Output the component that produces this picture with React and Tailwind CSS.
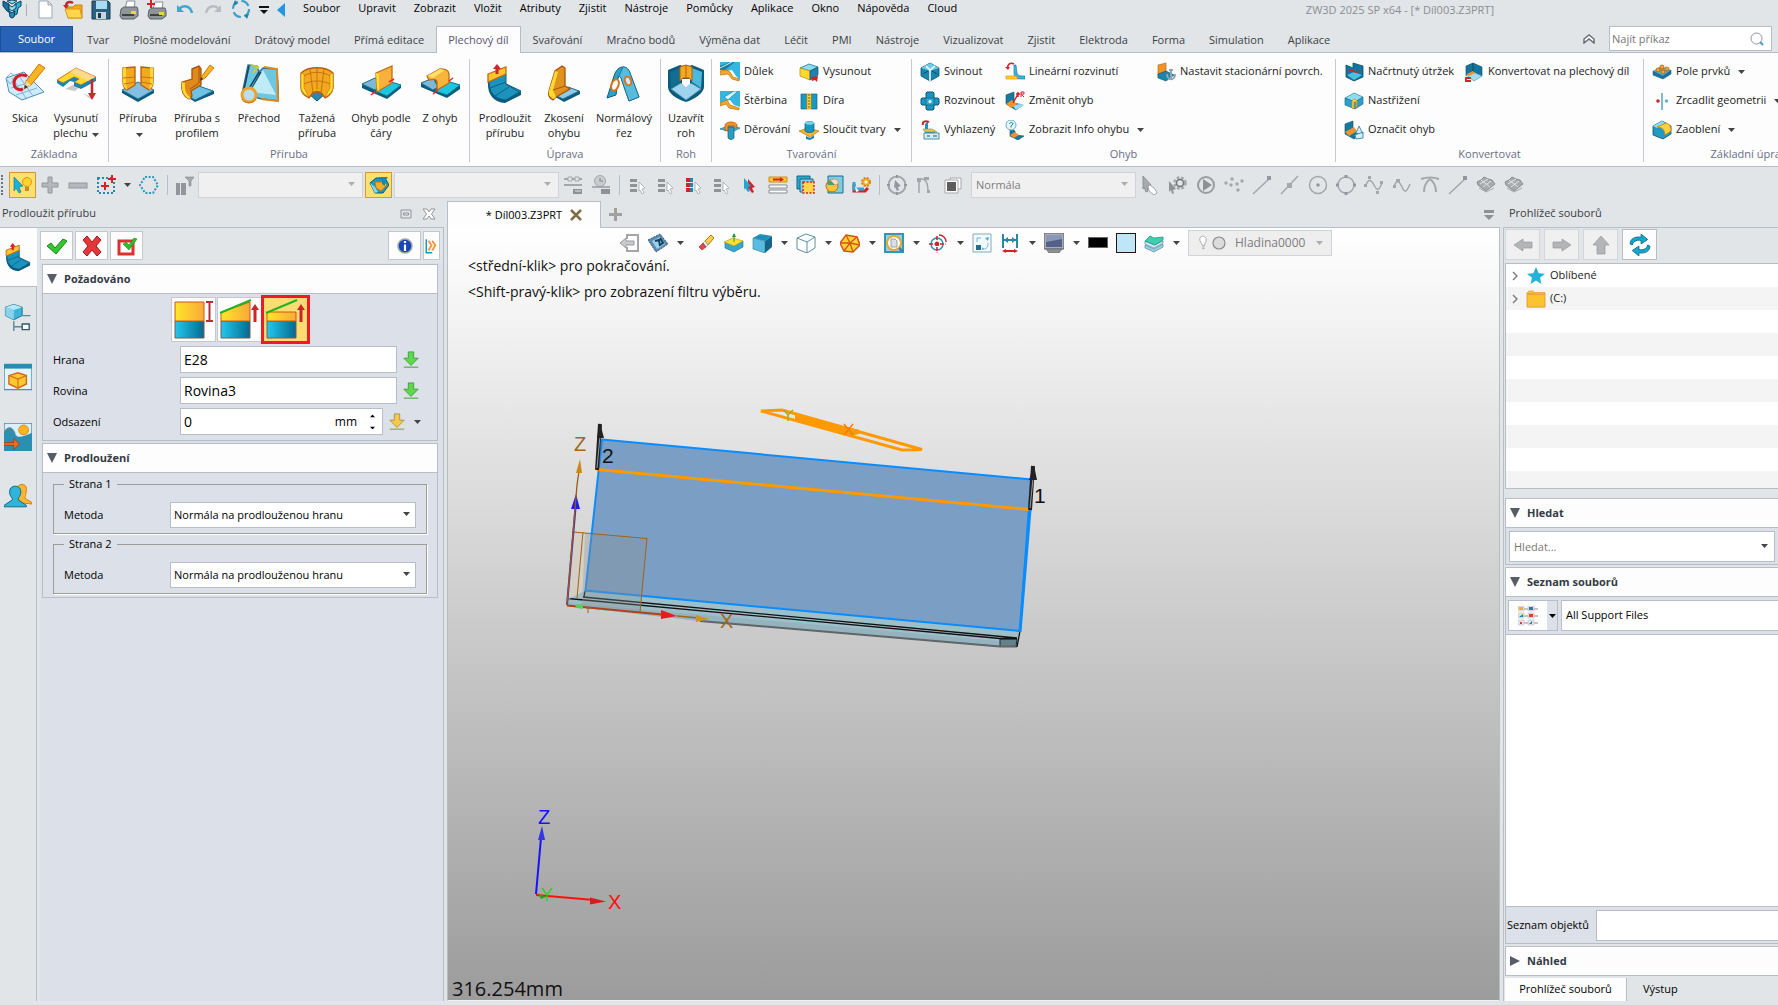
import React, { useState } from "react";
import clsx from "clsx";

// 20x20 drawings used in the bars and the side panels
const art = {
  logo: (
    <>
      <path d="M1 1l6 3v8l-2-1-4-5z" fill="#1b6f9c" stroke="#0d3b55" />
      <path d="M19 1l-6 3-2 12 4-2 1-6 3-2z" fill="#27b4dc" stroke="#0d3b55" />
      <path d="M5 1l5 3 5-3-5-1zM7 5l3 2 4-3v4l-4 3-3-2z" fill="#8edcf3" stroke="#17455f" />
      <path d="M7 11l3 2 3-2-1 6-2 1-2-1z" fill="#1d8fbb" stroke="#0d3b55" />
    </>
  ),
  doc: <path d="M4 1h9l4 4v13H4zM13 1v4h4" fill="#fff" stroke="#9ba7b3" />,
  open: (
    <>
      <path d="M4 7h6l2-2h7v13H5z" fill="#f4a91c" stroke="#c98210" />
      <path d="M2 9h15l2 9H5z" fill="#ffd54a" stroke="#dd9a17" />
      <path d="M3 6c0-4 4-5 7-3" fill="none" stroke="#d2232a" strokeWidth="2.4" />
      <path d="M0 5h6L3 9z" fill="#d2232a" />
    </>
  ),
  save: (
    <>
      <path d="M1 1h16l2 2v16H1z" fill="#2a6180" stroke="#173b50" />
      <rect x="5" y="1" width="11" height="8" fill="#a9dcf0" />
      <rect x="5" y="12" width="10" height="7" fill="#c8d3da" />
      <rect x="7" y="13" width="3" height="5" fill="#173b50" />
    </>
  ),
  printer: (
    <>
      <path d="M6 9l2-8h8l-1 8z" fill="#fff" stroke="#8a8f94" />
      <path d="M2 9l3-2h13l1 3v6l-4 3H3l-2-3z" fill="#8f959b" stroke="#5c6166" />
      <path d="M3 15h12" stroke="#3d4145" strokeWidth="2" />
      <rect x="12" y="11" width="5" height="3" fill="#e9d93c" />
    </>
  ),
  printerAdd: (
    <>
      <path d="M6 9l2-7h8l-1 7z" fill="#fff" stroke="#8a8f94" />
      <path d="M2 10l3-2h13l1 3v5l-4 3H3l-2-3z" fill="#8f959b" stroke="#5c6166" />
      <path d="M3 15h12" stroke="#3d4145" strokeWidth="2" />
      <rect x="12" y="12" width="5" height="3" fill="#e9d93c" />
      <path d="M4 0v8M0 4h8" stroke="#d2232a" strokeWidth="2" />
    </>
  ),
  undo: (
    <>
      <path d="M4 9c4-4 11-4 13 4" fill="none" stroke="#3ba9cc" strokeWidth="2.500" />
      <path d="M2 5v7h7z" fill="#3ba9cc" />
    </>
  ),
  redo: (
    <>
      <path d="M16 9C12 5 5 5 3 13" fill="none" stroke="#b9bdc1" strokeWidth="2.500" />
      <path d="M18 5v7h-7z" fill="#b9bdc1" />
    </>
  ),
  cycle: (
    <>
      <circle cx="10" cy="9" r="8" fill="none" stroke="#3ba0c6" strokeWidth="2.2" strokeDasharray="9 3.6" />
      <path d="M2 5l5-1-3-4zM18 14l-5 1 3 4z" fill="#1f83ab" />
    </>
  ),
  cursorBulb: (
    <>
      <path d="M1 2l9 9-4 1 2 5-2 1-3-5-2 3z" fill="#17b3dd" stroke="#0a6f92" strokeWidth=".6" />
      <circle cx="14" cy="7" r="4.500" fill="#ffd52e" stroke="#dd941b" />
      <path d="M12 12h4v4h-4z" fill="#c58c2a" />
    </>
  ),
  plus: <path d="M8 2h4v6h6v4h-6v6H8v-6H2V8h6z" fill="#b5b8bb" stroke="#93979b" />,
  minus: <rect x="1" y="8" width="18" height="5" fill="#b5b8bb" stroke="#93979b" />,
  pick: (
    <>
      <rect x="2" y="3" width="16" height="15" fill="none" stroke="#2787ad" strokeWidth="2" strokeDasharray="2 2" />
      <path d="M9 7v8M5 11h8M16 0v8M12 4h8" stroke="#d2232a" strokeWidth="2" />
    </>
  ),
  hexSel: <path d="M6 2h8l5 8-5 8H6l-5-8z" fill="none" stroke="#2d97bd" strokeWidth="2" strokeDasharray="2 1.6" />,
  filter: (
    <>
      <path d="M2 8h4v12H2zM7 8h5v12H7z" fill="#93979b" />
      <path d="M11 2h9l-3 4v5h-2V6z" fill="#a4a8ab" stroke="#83878b" strokeWidth=".6" />
    </>
  ),
  partFilter: (
    <>
      <path d="M1 8l6-5h9l4 7-6 8H6z" fill="#1a9bc4" stroke="#0e5673" />
      <path d="M1 8l5 4 3 5-3 1z" fill="#8ad7ef" />
      <path d="M6 7h9l3 3-6 6-5-3z" fill="#f4ab25" stroke="#b9730d" strokeWidth=".8" />
      <path d="M10 2h9l-3 4v5l-3-2V6z" fill="#1e86a8" />
    </>
  ),
  chain: (
    <>
      <path d="M1 4h4m3 0h4m3 0h4M1 10h18" stroke="#a3a7aa" strokeWidth="2" />
      <path d="M5 2h4v4H5zM12 2h4v4h-4z" fill="#e1e5e8" stroke="#a3a7aa" />
      <path d="M10 14h9v5h-9z" fill="#8e9295" />
      <path d="M12 16h6" stroke="#e1e5e8" />
    </>
  ),
  clock: (
    <>
      <circle cx="9" cy="6" r="5.500" fill="#c9ccce" stroke="#a3a7aa" />
      <path d="M9 3v3h3M1 12h18" fill="none" stroke="#989ca0" strokeWidth="1.500" />
      <path d="M10 14h9v5h-9z" fill="#8e9295" />
    </>
  ),
  listPick: (
    <>
      <path d="M2 4h7v3H2zM2 9h7v3H2zM2 14h7v3H2z" fill="#8f9396" />
      <path d="M11 7l6 6-3 1 2 4-2 1-2-4-1 1z" fill="#fff" stroke="#a3a7aa" strokeWidth=".8" />
    </>
  ),
  listPickOn: (
    <>
      <path d="M2 3h4v4H2zM2 8h4v4H2zM2 13h4v4H2z" fill="#d2232a" />
      <path d="M6 3h3v4H6zM6 8h3v4H6zM6 13h3v4H6z" fill="#1f86ad" />
      <path d="M11 7l6 6-3 1 2 4-2 1-2-4-1 1z" fill="#fff" stroke="#a3a7aa" strokeWidth=".8" />
    </>
  ),
  arrows2: (
    <>
      <path d="M8 4l7 8-3 1 2 4-2 1-3-4-1 2z" fill="#d2232a" />
      <path d="M4 3l7 8-3 1 2 4-2 1-3-4-1 2z" fill="#22a6d0" />
    </>
  ),
  layersList: (
    <>
      <path d="M1 2h18v5H1z" fill="#ffc833" stroke="#cf8c16" />
      <path d="M1 10h18v3H1zM1 15h18v3H1z" fill="#fff" stroke="#858b91" />
      <path d="M5 4.500h8" stroke="#d2232a" strokeWidth="2" />
      <path d="M12 2l4 2.500-4 2.500z" fill="#d2232a" />
    </>
  ),
  boxSel: (
    <>
      <path d="M1 1h13v13H1z" fill="#2ca8d0" stroke="#0e6788" />
      <path d="M4 4h13v13H4z" fill="#7dd0e9" stroke="#0e6788" />
      <path d="M7 7h11v11H7z" fill="#ffd54a" stroke="#d2232a" strokeWidth="1.500" strokeDasharray="2 1.500" />
    </>
  ),
  handBox: (
    <>
      <path d="M4 1h15v17H4z" fill="#7fcbe3" stroke="#17708f" />
      <circle cx="8" cy="11" r="6" fill="#f8c23a" stroke="#b9730d" />
      <path d="M3 8c3-3 6-3 10 0l-3 2H4z" fill="#4f9d6a" />
      <path d="M6 5l6-1 3 4-4 2z" fill="#f8dfc0" stroke="#b58a5a" strokeWidth=".6" />
    </>
  ),
  gearPart: (
    <>
      <path d="M2 9v7h11l3-3" fill="none" stroke="#d2232a" strokeWidth="3" />
      <path d="M2 7v7h10" fill="none" stroke="#2ea7cf" strokeWidth="3" />
      <circle cx="14" cy="7" r="4" fill="#f4b12a" stroke="#d08715" strokeWidth="2" strokeDasharray="2 1.200" />
      <circle cx="14" cy="7" r="1.500" fill="#fff" />
      <path d="M3 11l4 5-3 1z" fill="#fff" />
    </>
  ),
  ringArrow: (
    <>
      <circle cx="10" cy="10" r="8.500" fill="none" stroke="#a3a7aa" strokeWidth="2" />
      <path d="M8 5l6 6-3 1 1 3-2 1-2-4-1 1z" fill="#93979b" />
      <path d="M10 0v3M10 17v3M0 10h3M17 10h3" stroke="#93979b" strokeWidth="2" />
    </>
  ),
  poles: (
    <>
      <path d="M4 18V4h3c4 0 6 3 6 13" fill="none" stroke="#a3a7aa" strokeWidth="1.500" />
      <path d="M2 3h4v4H2zM9 2h5v3H9zM12 15h3v3h-3z" fill="#a3a7aa" />
    </>
  ),
  squares: (
    <>
      <path d="M7 3h11v11H7z" fill="#fff" stroke="#a3a7aa" />
      <path d="M2 5h13v13H2z" fill="#fff" stroke="#a3a7aa" />
      <path d="M4 7h9v9H4z" fill="#5d5d5d" />
    </>
  ),
  handCursor: (
    <>
      <path d="M3 1l8 9-4 1 1 5-2 1-2-5-1 2z" fill="#a8abae" stroke="#8e9295" />
      <path d="M8 11l2-1 5 4 2 4-3 2-5-4z" fill="#fff" stroke="#a3a7aa" />
    </>
  ),
  gearCursor: (
    <>
      <circle cx="12" cy="8" r="5" fill="#d5d7d9" stroke="#a3a7aa" strokeWidth="3.500" strokeDasharray="2.400 1.600" />
      <circle cx="12" cy="8" r="3.500" fill="#e1e5e8" stroke="#74787b" strokeWidth="1.500" />
      <path d="M1 6l7 8-3 1 1 3-2 1-1-4-2 2z" fill="#8e9295" />
    </>
  ),
  play: (
    <>
      <circle cx="10" cy="10" r="8" fill="none" stroke="#999da0" strokeWidth="2" />
      <path d="M7 4v12l9-6z" fill="#8e9295" />
    </>
  ),
  dots: (
    <g fill="#a3a7aa">
      <circle cx="2" cy="8" r="1.700" />
      <circle cx="8" cy="4" r="1.700" />
      <circle cx="7" cy="10" r="1.700" />
      <circle cx="13" cy="9" r="1.700" />
      <circle cx="18" cy="6" r="1.700" />
      <circle cx="14" cy="15" r="1.700" />
    </g>
  ),
  lineEnd: (
    <>
      <path d="M1 19L18 3" stroke="#a3a7aa" strokeWidth="1.500" />
      <path d="M15 1h4v4h-4z" fill="#93979b" />
    </>
  ),
  lineMid: (
    <>
      <path d="M1 19L18 1" stroke="#a3a7aa" strokeWidth="1.500" />
      <path d="M7 8h5v5H7z" fill="#a3a7aa" />
    </>
  ),
  circleDot: (
    <>
      <circle cx="10" cy="10" r="8.500" fill="none" stroke="#a3a7aa" strokeWidth="1.500" />
      <circle cx="10" cy="10" r="1.800" fill="#93979b" />
    </>
  ),
  circleQuad: (
    <>
      <circle cx="10" cy="10" r="8" fill="none" stroke="#a3a7aa" strokeWidth="1.500" />
      <path d="M8.500 0h3v3h-3zM8.500 17h3v3h-3zM0 8.500h3v3H0zM17 8.500h3v3h-3z" fill="#93979b" />
    </>
  ),
  spline: (
    <>
      <path d="M2 10c2-6 5-6 8 0s5 6 8-2" fill="none" stroke="#a3a7aa" strokeWidth="1.500" />
      <path d="M4 1h3v3H4zM0 9h3v3H0zM12 16h3v3h-3zM16 6h3v3h-3z" fill="#a3a7aa" />
    </>
  ),
  spline2: (
    <>
      <path d="M2 12c2-7 5-7 8 0s5 4 8-3" fill="none" stroke="#a3a7aa" strokeWidth="1.500" />
      <path d="M4 4h4v3H4zM1 10h3v3H1z" fill="#a3a7aa" />
    </>
  ),
  tangent: (
    <path d="M1 4c6-2 12-2 18 0M4 17c0-7 2-10 6-13M16 17c0-7-2-10-6-13" fill="none" stroke="#a3a7aa" strokeWidth="2" />
  ),
  mesh: (
    <>
      <path d="M1 7l4-2 3-3 4 2 4 1 3 4-4 3-5 4-4-3-4-3z" fill="#a8abae" stroke="#888c8f" />
      <path d="M4 9l8-5M7 12l8-6M5 5l9 7" stroke="#e1e5e8" />
      <path d="M3 13l7 4 8-4" fill="none" stroke="#a3a7aa" />
    </>
  ),
  dimple: (
    <>
      <path d="M0 0h20v18l-4-4-4-6-5 1-7-1z" fill="#35b6de" />
      <path d="M0 4l10-4h5L5 8H0z" fill="#1a7fa5" />
      <path d="M0 9l6-1 4 2 3 5 6 2v2l-7-2-4-5-8 1z" fill="#f6a926" stroke="#b9730d" strokeWidth=".7" />
      <path d="M0 6L12 0" stroke="#baf0ff" />
    </>
  ),
  slot: (
    <>
      <path d="M0 0h20v16l-6-2-4-5-10 4z" fill="#35b6de" />
      <path d="M4 6L14 0h4L8 9z" fill="#d7f4fc" stroke="#1a7fa5" strokeWidth=".7" />
      <path d="M0 12l8-3 3 3-6 4-5 1z" fill="#fff" />
      <path d="M0 12l7-3 3 5 9 3v2l-10-2-3-4-6 2z" fill="#f6a926" stroke="#b9730d" strokeWidth=".7" />
    </>
  ),
  pierce: (
    <>
      <path d="M0 9l8-3 12 2-8 4z" fill="#49b9dc" stroke="#17708f" strokeWidth=".7" />
      <path d="M8 7h6v11l-3 2-3-2z" fill="#2a9cc4" stroke="#135d79" strokeWidth=".7" />
      <path d="M5 11V5c1-4 11-4 12 0v3h-3V6H8v4z" fill="#f0932b" stroke="#b05f0d" strokeWidth=".8" />
    </>
  ),
  extrude: (
    <>
      <path d="M1 6l9-4 9 3-8 4z" fill="#8edcf3" stroke="#0e6788" strokeWidth=".7" />
      <path d="M1 6l10 3v9L1 14z" fill="#ffd92e" stroke="#b9870d" strokeWidth=".7" />
      <path d="M11 9l8-4v8l-8 5z" fill="#1a86ad" stroke="#0e5673" strokeWidth=".7" />
      <path d="M12 15l7-1-1 6-2-2-3 1z" fill="#d2232a" />
    </>
  ),
  hole: (
    <>
      <path d="M2 3h6v15H2zM12 3h6v15h-6z" fill="#1a97c2" stroke="#0e6788" strokeWidth=".7" />
      <path d="M8 3h4v15H8z" fill="#ffd92e" stroke="#d99a1a" strokeWidth=".8" />
      <path d="M10 3v15" stroke="#6a5a10" strokeDasharray="2 1" />
    </>
  ),
  mergeShape: (
    <>
      <path d="M0 11l9-3 11 3-9 6z" fill="#f8b52f" stroke="#b9730d" strokeWidth=".7" />
      <path d="M6 3c2-2 7-2 9 0v8c-2 2-7 2-9 0z" fill="#1a97c2" stroke="#0e5673" strokeWidth=".7" />
      <ellipse cx="10.500" cy="3" rx="4.500" ry="1.800" fill="#79d0ea" />
      <path d="M7 16l4 2 4-3v3l-4 2-4-1z" fill="#1a86ad" />
    </>
  ),
  fold: (
    <>
      <path d="M1 6l9-5 9 5v8l-9 5-9-5z" fill="#1787b0" stroke="#0d4d68" strokeWidth=".8" />
      <path d="M1 6l9-5 9 5-9 3z" fill="#6bcbe8" />
      <path d="M10 8v11M6 4l4 4 5-4" stroke="#fff" strokeWidth="1.500" fill="none" />
      <path d="M3 12l5-3M17 12l-5-3" stroke="#0d4d68" />
    </>
  ),
  unfold: (
    <>
      <path d="M7 1h6l1 1v5h4l1 1v5l-1 1h-4v4l-1 1H7l-1-1v-4H2l-1-1V8l1-1h4V2z" fill="#1b95c0" stroke="#0d5b7c" />
      <path d="M6 7h8v7H6z" fill="#2fa9d2" stroke="#0d5b7c" strokeWidth=".6" />
      <circle cx="10" cy="10.500" r="1.500" fill="#fff" />
    </>
  ),
  flat: (
    <>
      <path d="M8 1v9l7 2v3L5 14V4z" fill="#1b95c0" />
      <path d="M3 9h9l5 3H5z" fill="#f8c23a" stroke="#b9730d" strokeWidth=".6" />
      <path d="M4 13h15v6H4z" fill="#d9ecf4" stroke="#4590ad" />
      <path d="M7 16h3m3 0h4" stroke="#4590ad" strokeWidth="1.500" />
      <path d="M9 2C5 0 2 2 3 5" fill="none" stroke="#d2232a" strokeWidth="2" />
    </>
  ),
  linear: (
    <>
      <path d="M11 3l1 8c1 3 3 3 8 3v3c-8 0-10 0-11-5L9 3z" fill="#35b6de" stroke="#17708f" strokeWidth=".6" />
      <path d="M1 14h10l2 3H1z" fill="#ffd02e" stroke="#cf8c16" strokeWidth=".6" />
      <path d="M9 2C5 0 2 3 3 6" fill="none" stroke="#d2232a" strokeWidth="1.600" />
      <path d="M0 5h5L3 8z" fill="#d2232a" />
    </>
  ),
  changeBend: (
    <>
      <path d="M1 4l8-3v11l9 2-7 5-10-6z" fill="#1579a0" stroke="#0d4d68" strokeWidth=".6" />
      <path d="M7 14l10-1 2 1-8 5z" fill="#9bdcf0" />
      <path d="M1 13l6-4 5 4-6 4z" fill="#f0932b" />
      <path d="M8 12l5-9M11 3h4M13 1v5" stroke="#d2232a" strokeWidth="1.500" />
      <path d="M16 6V1h3v2h-3l3 3" fill="none" stroke="#d2232a" />
    </>
  ),
  bendInfo: (
    <>
      <path d="M5 8l5 3v4l9 1-6 4-8-4z" fill="#1579a0" stroke="#0d4d68" strokeWidth=".6" />
      <path d="M5 15l5-3 4 3-5 3z" fill="#f0932b" />
      <circle cx="6" cy="5" r="5" fill="#e7f6fb" stroke="#62b4cf" />
      <path d="M4.500 4c0-2 3.500-2 3.500 0L6 6v1.500" fill="none" stroke="#1579a0" />
    </>
  ),
  stationary: (
    <>
      <path d="M2 3l8-2v9l-8 5z" fill="#f0932b" stroke="#b05f0d" strokeWidth=".6" />
      <path d="M2 12l8-3 8 4-8 6-8-3z" fill="#1b86ad" stroke="#0d4d68" strokeWidth=".6" />
      <path d="M15 8v10M11 12c0 7 8 7 8 0M13 8h4" fill="none" stroke="#8ea6b0" strokeWidth="2" />
    </>
  ),
  rip: (
    <>
      <path d="M2 3l7 3V1l10 3v11l-9 4-8-4z" fill="#14759c" stroke="#0d4d68" strokeWidth=".8" />
      <path d="M3 13l7-3 8 3-8 5z" fill="#4dbfe0" />
      <path d="M5 9c3-3 6 4 10 0" fill="none" stroke="#d2232a" strokeWidth="1.500" />
    </>
  ),
  shear: (
    <>
      <path d="M1 7l9-5 9 4-8 5z" fill="#8edcf3" stroke="#17708f" strokeWidth=".6" />
      <path d="M1 7l10 4 8-5v7l-8 5L1 14z" fill="#2ba1c9" stroke="#0e6788" strokeWidth=".6" />
      <path d="M8 17v-7c2-3 4-2 5 0v6l-1 1v-6h-2v7z" fill="#ffd34a" stroke="#c98210" strokeWidth=".7" />
    </>
  ),
  markBend: (
    <>
      <path d="M1 4l8-3v9l9 4-8 5-9-5z" fill="#1579a0" stroke="#0d4d68" strokeWidth=".6" />
      <path d="M1 12l9-5 3 4-8 5z" fill="#f0932b" />
      <path d="M12 13l3-7 4 8M11 15l8-3v6l-7 1z" fill="#d5edf5" stroke="#4590ad" />
    </>
  ),
  convert: (
    <>
      <path d="M2 4l7-3v9l-7 4zM9 1l9 4v9l-9-4z" fill="#14759c" stroke="#0d4d68" strokeWidth=".6" />
      <path d="M2 13l7-3 9 4-8 5z" fill="#a3def0" stroke="#4590ad" strokeWidth=".6" />
      <path d="M3 12l6-3 2 2-6 3z" fill="#f0932b" />
      <path d="M7 16H2v3h5" fill="none" stroke="#d2232a" strokeWidth="1.800" />
    </>
  ),
  pattern: (
    <>
      <path d="M1 9l8-5 10 4-8 6z" fill="#46b9dc" />
      <path d="M1 9l10 5 8-6v4l-8 5-10-4z" fill="#14759c" stroke="#0d4d68" strokeWidth=".5" />
      <g fill="#f4a52a" stroke="#b9530d" strokeWidth=".7">
        <circle cx="6" cy="8" r="2" />
        <circle cx="10" cy="5" r="2" />
        <circle cx="11" cy="10" r="2" />
        <circle cx="15" cy="7" r="2" />
      </g>
    </>
  ),
  mirror: (
    <>
      <path d="M10 2v17" stroke="#4ba7c6" strokeWidth="1.500" />
      <circle cx="6" cy="10" r="1.800" fill="#d2232a" />
      <circle cx="14.500" cy="10" r="1.800" fill="#6db4cd" />
    </>
  ),
  fillet: (
    <>
      <path d="M1 6l9-5 9 5v8l-8 5-10-4z" fill="#2398c2" stroke="#0e5673" strokeWidth=".8" />
      <path d="M1 6l9-5 3 2-8 5z" fill="#8edcf3" />
      <path d="M5 7l9-4c4 1 5 4 5 8l-6 4c0-5-3-8-8-8z" fill="#ffd23a" stroke="#c98210" strokeWidth=".8" />
    </>
  ),
  manager: (
    <>
      <path d="M1 3l6-2 6 2v6l-6 3-6-3z" fill="#3fb4da" stroke="#0e6788" strokeWidth=".6" />
      <path d="M1 3l6 2 6-2-6-2z" fill="#b5e9f7" />
      <path d="M7 5v7L1 9V3z" fill="#8ad2ea" />
      <path d="M13 9h6M7 13v7M7 17h6" stroke="#5f8798" />
      <path d="M13 15h5v4h-5z" fill="#fff" stroke="#305a6e" />
    </>
  ),
  visual: (
    <>
      <path d="M0 1h20v18H0z" fill="#e4f4fa" stroke="#4a91ab" />
      <path d="M0 1h20v3H0z" fill="#1f8fb5" />
      <path d="M3.500 9l6.500-2 6 2v6l-6 3-6.500-3z" fill="#ffc82f" stroke="#d26a19" />
      <path d="M3.500 9l6.500 2.500L16 9M10 11.500V18" fill="none" stroke="#d26a19" strokeWidth=".8" />
    </>
  ),
  scenery: (
    <>
      <path d="M0 0h20v20H0z" fill="#d9f0f8" stroke="#4a91ab" />
      <path d="M0 7c4-6 6-3 8 1 2 3 5 2 12-1v13H0z" fill="#2a8fb0" />
      <path d="M0 7c4-6 6-3 8 1" fill="none" stroke="#5f8798" />
      <circle cx="14" cy="5" r="3.500" fill="#ffb321" stroke="#d98216" strokeWidth=".6" />
      <path d="M0 14h7v-3l4 4-4 4v-3H0z" fill="#f26a21" stroke="#a83b0c" strokeWidth=".6" />
    </>
  ),
  users: (
    <>
      <path d="M9 4c1-4 7-4 7 0 0 4-1 5-1 7l5 3v1l-9-1z" fill="#ffb62b" stroke="#cf7d16" strokeWidth=".7" />
      <path d="M4 6c0-5 8-5 8 0 0 4-2 4-2 6l6 4v1H0v-1l6-4c0-2-2-2-2-6z" fill="#2fb4da" stroke="#0e6788" strokeWidth=".7" />
    </>
  ),
  check: <path d="M0 10l4-3 4 5 8-9 4 2L9 18z" fill="#35c52e" stroke="#158a1b" />,
  cross: <path d="M1 4l4-4 5 6 5-6 4 4-5 6 5 6-4 4-5-6-5 6-4-4 5-6z" fill="#e5373a" stroke="#a51a1e" />,
  applyBox: (
    <>
      <path d="M2 5h14v13H2z" fill="#fff" stroke="#e02f33" strokeWidth="3" />
      <path d="M6 8l3-2 3 3 5-7 3 1-8 11z" fill="#2fbf2a" stroke="#158a1b" strokeWidth=".6" />
    </>
  ),
  info: (
    <>
      <circle cx="10" cy="10" r="7" fill="#1747b4" stroke="#9fa5ab" strokeWidth="1.500" />
      <path d="M10 8.500V15M10 5v2" stroke="#fff" strokeWidth="2.200" />
    </>
  ),
  collapse: (
    <>
      <path d="M3 1v18h8" fill="none" stroke="#1f93bb" strokeWidth="2" />
      <path d="M6 3l4 6-4 7M11 3l4 6-4 7" fill="none" stroke="#f1973f" strokeWidth="2.500" />
    </>
  ),
  down: (
    <>
      <path d="M7 1h6v7h5l-8 8-8-8h5z" fill="#5fd84e" stroke="#3a9f37" />
      <path d="M2 18h16" stroke="#6dad6a" strokeWidth="1.500" />
    </>
  ),
  downGold: (
    <>
      <path d="M7 1h6v7h5l-8 8-8-8h5z" fill="#f9c74a" stroke="#a3924a" />
      <path d="M2 18h16" stroke="#9fae52" strokeWidth="1.500" />
    </>
  ),
  exit: (
    <>
      <path d="M7 6V2h11v16H7v-4" fill="none" stroke="#a4a6a8" strokeWidth="2" />
      <path d="M14 8H6V5l-6 5 6 5v-3h8z" fill="#c8cacc" stroke="#999b9d" />
    </>
  ),
  camera: (
    <>
      <path d="M0 7l12-6 8 10-12 8z" fill="#5f8db0" stroke="#35556f" strokeDasharray="2 1" />
      <path d="M4 8l8-4 5 7-8 5z" fill="#9fd0ea" />
      <path d="M7 8l4-1 1 6M12 5l3 5-3 2" stroke="#0f4563" strokeWidth="2" fill="none" />
    </>
  ),
  eraser: (
    <>
      <path d="M9 8l6-6 3 3-6 7z" fill="#ffcf4a" stroke="#a87b1d" />
      <path d="M7 10l2-2 3 4-2 2z" fill="#e9edf0" stroke="#8a8f94" strokeWidth=".6" />
      <path d="M3 14l4-4 3 4-4 3z" fill="#e2474a" stroke="#a51a1e" strokeWidth=".6" />
    </>
  ),
  planeUp: (
    <>
      <path d="M1 9v6l9 4 9-5V8l-9 5z" fill="#35a7cf" stroke="#1c7091" strokeWidth=".6" />
      <path d="M0 9l9-4 10 3-9 5z" fill="#ffe02e" stroke="#a8961d" strokeWidth=".6" />
      <path d="M10 1v8" stroke="#1f9a2d" />
      <path d="M8 4l2-4 2 4z" fill="#1f9a2d" />
    </>
  ),
  shaded: (
    <>
      <path d="M1 5l7-4 12 2-7 5z" fill="#1f8fb8" />
      <path d="M1 5l12 3v12L1 16z" fill="#5cbce0" stroke="#2a7fa0" strokeWidth=".6" />
      <path d="M13 8l7-5v11l-7 6z" fill="#17648a" />
    </>
  ),
  wire: (
    <>
      <path d="M1 5l9-4 9 3v11l-8 5-10-4z" fill="#fff" stroke="#5b8fa8" />
      <path d="M1 5l10 4 8-5M11 9v11" fill="none" stroke="#5b8fa8" />
    </>
  ),
  polygon: (
    <>
      <path d="M6 2l11 2 3 8-7 7-9-1-4-8z" fill="#ffd42e" stroke="#d2541a" strokeWidth="1.500" />
      <path d="M10 10l7-6M10 10L6 2M10 10l10 2M10 10l3 9M10 10l-6 8M10 10H0" stroke="#d2541a" strokeWidth="1.300" />
    </>
  ),
  zoomDoc: (
    <>
      <path d="M1 1h18v18H1z" fill="#8ed3ea" stroke="#3596ba" strokeWidth="2" />
      <circle cx="10" cy="10" r="7" fill="#fff" stroke="#e8a92a" strokeWidth="2" />
      <path d="M7 6h4l2 2v6H7z" fill="#d7e1e6" stroke="#75838c" strokeWidth=".7" />
      <path d="M15 15l4 4" stroke="#4f7f93" strokeWidth="2.500" />
    </>
  ),
  target: (
    <>
      <circle cx="9" cy="11" r="6" fill="none" stroke="#2a8fb5" strokeWidth="1.500" />
      <path d="M9 3v17M1 11h17" stroke="#d2232a" strokeWidth="1.600" strokeDasharray="4 1.500" />
      <path d="M7 11h4M9 9v4" stroke="#d2232a" strokeWidth="3" />
      <path d="M11 2c4 0 7 3 7 7" fill="none" stroke="#d2232a" strokeWidth="1.500" />
    </>
  ),
  viewBox: (
    <>
      <path d="M1 1h18v18H1z" fill="#f4fafc" stroke="#8aa9b8" />
      <path d="M4 12h5v5H4z" fill="#1f6f97" />
      <path d="M5 9V5h4M11 16c4 0 5-2 5-6" fill="none" stroke="#63bcd8" />
      <path d="M13 5l4-1-1 4zM12 16l-2-2v3z" fill="#49b0d2" />
    </>
  ),
  dims: (
    <>
      <path d="M3 1v14M17 1v14M4 7h12" stroke="#2a87a8" strokeWidth="2" fill="none" />
      <path d="M4 7l4-3v6zM16 7l-4-3v6z" fill="#2a87a8" />
      <path d="M4 18h12" stroke="#d2232a" strokeWidth="2" />
      <path d="M2 18l4-2v4zM18 18l-4-2v4z" fill="#d2232a" />
    </>
  ),
  monitor: (
    <>
      <path d="M0 0h20v16H0z" fill="#a9adb2" stroke="#5d6063" />
      <path d="M2 2h16v12H2z" fill="#52618a" />
      <path d="M2 2h16v4L2 9z" fill="#8b97b6" />
      <path d="M2 16h16l-3 4H5z" fill="#8d9195" stroke="#5d6063" strokeWidth=".6" />
    </>
  ),
  layers: (
    <>
      <path d="M1 12l9 4 9-5v3l-9 5-9-4z" fill="#9fd0e2" stroke="#4a8ba3" strokeWidth=".7" />
      <path d="M1 8l9 4 9-4v2l-9 5-9-4z" fill="#d5edf5" stroke="#4a8ba3" strokeWidth=".7" />
      <path d="M1 8l5-5 4 2 9-1v3l-8 5z" fill="#3fcfae" stroke="#1b8d76" strokeWidth=".7" />
    </>
  ),
  bulb: <path d="M6 4c2-4 8-3 8 2 0 3-2 4-2 7H9c0-3-4-5-3-9zM9 15h3M9 17h3" fill="#fdfdfd" stroke="#9a9a9a" />,
  disc: <circle cx="10" cy="10" r="7.500" fill="#dcdcdc" stroke="#8c8c8c" strokeWidth="1.500" />,
  back: <path d="M1 10l9-6v3h9v6h-9v3z" fill="#b3b5b7" stroke="#97999b" strokeWidth=".7" />,
  forward: <path d="M19 10l-9-6v3H1v6h9v3z" fill="#b3b5b7" stroke="#97999b" strokeWidth=".7" />,
  up: <path d="M10 1l8 9h-4v9H6v-9H2z" fill="#b3b5b7" stroke="#97999b" strokeWidth=".7" />,
  refresh: (
    <g fill="#17a6ce" stroke="#0c6b88" strokeWidth=".8">
      <path d="M1 9c0-5 5-7 10-6V0l6 5-6 4V6C8 5 4 6 3 10z" />
      <path d="M19 11c0 5-5 7-10 6v3l-6-5 6-4v3c3 1 7 0 8-4z" />
    </g>
  ),
  star: <path d="M10 0l3 7 7 .5-5.500 4.500L16 19l-6-4-6 4 1.500-7L0 7.500 7 7z" fill="#21b3d9" />,
  folder: (
    <>
      <path d="M0 3h20v16H0z" fill="#fcc42c" stroke="#e09a3a" />
      <path d="M2 1h5l1 3H1z" fill="#fcc42c" stroke="#e09a3a" strokeWidth=".7" />
      <path d="M0 5h20" stroke="#e8a236" />
    </>
  ),
  tree: (
    <>
      <path d="M4 3h16M4 10h16M4 17h16" stroke="#8c9296" />
      <path d="M0 0h6v5H0zM0 7h6v5H0zM0 14h6v5H0zM10 0h6v5h-6zM10 7h6v5h-6zM10 14h6v5h-6z" fill="#e3e6e8" stroke="#b4b9bd" strokeWidth=".5" />
      <path d="M1 1h4v3H1z" fill="#f5b021" />
      <path d="M1 11l4-3v3zM11 1h4v3h-4zM11 18l3-3v3z" fill="#1c84aa" />
      <path d="M11 8h4v3h-4zM2 16h2v2H2z" fill="#d2452a" />
    </>
  ),
};

// 40x40 drawings of the large ribbon buttons
const bigArt = {
  sketch: (
    <>
      <path d="M1 14l18-6 20 20-22 8L4 28z" fill="#cfeafa" stroke="#4f8fb5" />
      <path d="M1 14l5-5 5 4-6 7zM6 24l20-6M11 31l21-7M14 12l14 20M7 14l14 20" fill="none" stroke="#7cb6d8" />
      <path d="M22 12c-8-3-13 2-13 7 0 5 4 8 9 6" fill="none" stroke="#cc2027" strokeWidth="3" />
      <path d="M34 0l6 4-14 17-7 4 2-8z" fill="#f9b51f" stroke="#c57b0f" />
      <path d="M21 17l5 4-7 4z" fill="#f6d6a8" />
      <path d="M19 25l1-4 3 2z" fill="#333" />
    </>
  ),
  plate: (
    <>
      <path d="M9 25l12-6 4 3-6 5zM26 29l12 5-3 1z" fill="#c9c9c9" />
      <path d="M1 16L20 4l20 9-15 8-7-3 5-3-5-2-11 6z" fill="#ffd92e" stroke="#d9731a" />
      <path d="M20 4l20 9-8 4-18-9z" fill="#ffdbb0" opacity=".7" />
      <path d="M1 16l6 3v4l-6-4zM7 19l11-6 5 2-5 3-4-1-7 6zM18 18l7 3v4l-7-3zM25 21l15-8v4l-15 8z" fill="#1b86ad" />
      <path d="M36 15v16" stroke="#d2232a" strokeWidth="2.500" />
      <path d="M32 29h8l-4 7z" fill="#d2232a" />
    </>
  ),
  flange: (
    <>
      <path d="M4 27l16-8 16 8v2l-16 9-16-9z" fill="#0d5b7c" />
      <path d="M4 26l16-8 16 8-16 9z" fill="#82bfe2" stroke="#2b7198" />
      <path d="M5 4l12-1v18l-8 5c-3-2-4-5-4-8z" fill="#f3a91f" stroke="#b95d0d" strokeWidth="1.300" />
      <path d="M23 3l12 1v14c0 3-1 6-4 8l-8-5z" fill="#f3a91f" stroke="#b95d0d" strokeWidth="1.300" />
      <path d="M5 4l3-1v17l1 6c-3-2-4-5-4-8zM35 4l-3-1v17l-1 6c3-2 4-5 4-8z" fill="#ffd92e" />
      <path d="M5 14l12-1M6 20l11-2M23 13l12 1M23 18l11 2" stroke="#c9720f" />
    </>
  ),
  flangeProfile: (
    <>
      <path d="M7 31l14-9 16 5v3L18 38z" fill="#0d5b7c" />
      <path d="M8 30l14-8 14 5-18 9z" fill="#6fc2e4" stroke="#2b7198" />
      <path d="M5 18l10-3V5l7-3 2 3v16l-10 6 1 5-3 3c-6-3-8-10-7-17z" fill="#e08a1c" stroke="#a9520c" strokeWidth="1.300" />
      <path d="M5 18l3 1c-1 8 2 12 6 15l-2 1c-6-3-8-10-7-17z" fill="#ffd92e" />
      <path d="M15 5l7-3v17l-9 6" fill="none" stroke="#a9520c" />
      <path d="M33 1l4 3-9 10-5 3 2-5z" fill="#f9b51f" stroke="#c57b0f" />
      <path d="M23 17l1-4 2 2z" fill="#333" />
    </>
  ),
  transition: (
    <>
      <path d="M9 1l9 1 2 6 4-4 14 1 2 32-17-2L3 30z" fill="#6cc7e0" stroke="#2b7198" strokeWidth="1.300" />
      <path d="M10 2l-6 28M20 8L8 28M22 8L10 30" fill="none" stroke="#17455f" strokeWidth="1.600" />
      <path d="M24 6l13 25-26-3z" fill="#d5f4fb" opacity=".8" />
      <path d="M25 3l13 2 1 32-17-2" fill="none" stroke="#e0891a" strokeWidth="2" />
      <path d="M12 1l7 2-5 6" fill="none" stroke="#c9c936" strokeWidth="2" />
      <circle cx="10" cy="31" r="7" fill="#b7dfec" stroke="#f0a12b" strokeWidth="3" />
      <path d="M3 35c2 5 12 5 14 0" fill="none" stroke="#c9720f" />
    </>
  ),
  lofted: (
    <>
      <path d="M11 29l9-6 9 6-9 8z" fill="#2d88ae" stroke="#0d4d68" />
      <path d="M4 9C12 2 28 2 36 9v15c-1 5-4 8-8 10l-3-4c-1-3-9-3-10 0l-3 4c-4-2-8-6-8-10z" fill="#f3a91f" stroke="#b95d0d" strokeWidth="1.300" />
      <path d="M4 9l3 1v14l5 9c-4-2-8-5-8-10zM36 9l-3 1v14l-5 9c4-2 8-5 8-10z" fill="#ffe12e" stroke="#c9720f" strokeWidth=".6" />
      <path d="M7 12c8-5 18-5 26 0M7 20c8-4 18-4 26 0M13 5l3 24M27 5l-3 24M20 4v21" fill="none" stroke="#c9720f" />
    </>
  ),
  bendLine: (
    <>
      <path d="M1 20l13-6 26 7v3L26 35 1 24z" fill="#0d5b7c" />
      <path d="M1 20l13-6 10 3-10 9z" fill="#7fb8d6" stroke="#2b7198" />
      <path d="M27 17l13 4-14 11-12-5z" fill="#1cc5e0" stroke="#0e7893" />
      <path d="M15 9l16-7v17l-15 9z" fill="#f8b13d" stroke="#c46a10" strokeWidth="1.300" />
      <path d="M15 9l3 1v17l-2-1z" fill="#ffe12e" />
      <path d="M10 31l5-4M28 18l5-3" stroke="#e8232a" strokeWidth="1.500" />
    </>
  ),
  zBend: (
    <>
      <path d="M1 19l12-5 27 7v4L27 34 1 23z" fill="#0d5b7c" />
      <path d="M1 19l12-5 5 9-5 3z" fill="#7fb8d6" stroke="#2b7198" />
      <path d="M27 17l13 4-13 10-12-4z" fill="#1cc5e0" stroke="#0e7893" />
      <path d="M7 12L20 5c4 0 9 0 9 6v8l-12 7v-7c0-4-2-4-8-3z" fill="#f8b53a" stroke="#c46a10" strokeWidth="1.300" />
      <path d="M7 12l13-7 5 1-12 8z" fill="#ffe06a" />
      <path d="M13 30l5-4M29 17l4-3" stroke="#e8232a" strokeWidth="1.500" />
    </>
  ),
  extend: (
    <>
      <path d="M3 17l18-7v11l15 7v3l-16 8C8 38 2 30 3 17z" fill="#0d5b7c" />
      <path d="M4 17l17-7v10l15 7-15 9C9 35 4 28 4 17z" fill="#1b93bd" stroke="#0e6082" />
      <path d="M5 24l16-6M10 32l14-9M34 28l-13-8" stroke="#0e6082" fill="none" />
      <path d="M3 10l18-7v7L3 18z" fill="#ffc52e" stroke="#c46a10" strokeWidth="1.300" />
      <path d="M12 4v6" stroke="#d2232a" strokeWidth="3" />
      <path d="M8 5l4-5 4 5z" fill="#d2232a" />
    </>
  ),
  chamfer: (
    <>
      <path d="M8 31l16-8 12 4v3L20 38z" fill="#0d5b7c" />
      <path d="M9 30l15-7 11 4-16 8z" fill="#8fcbe8" stroke="#2b7198" />
      <path d="M5 27l6-20 7-5 3 2v18l5 3-14 8-3 3c-4-2-5-5-4-9z" fill="#e0921f" stroke="#a9520c" strokeWidth="1.300" />
      <path d="M5 27l6-20 3 1-5 18 3 7-2 2c-4-2-6-4-5-8z" fill="#ffd92e" />
      <path d="M9 26l12-4" stroke="#a9520c" />
    </>
  ),
  normalCut: (
    <>
      <path d="M3 34L10 12c2-6 5-9 9-9 4 0 6 3 7 6l9 24-10 4-8-23c-1-2-2-2-3 0l-2 17z" fill="#2aa2ca" stroke="#0d5b7c" />
      <path d="M19 3c4 0 6 3 7 6l9 24-10 4-8-23c-1-2-2-2-3 0z" fill="#58bbdb" stroke="#0d5b7c" strokeWidth=".6" />
      <ellipse cx="11" cy="21" rx="3.500" ry="6" fill="#fff" stroke="#d9731a" strokeWidth="2" transform="rotate(20 11 21)" />
      <ellipse cx="24" cy="17" rx="3" ry="4.500" fill="#cfeafa" stroke="#d9731a" strokeWidth="2" transform="rotate(-20 24 17)" />
    </>
  ),
  closeCorner: (
    <>
      <path d="M2 6L14 1l6 2 6-2 12 5v17c0 5-8 12-18 15C10 35 2 29 2 23z" fill="#0d5b7c" />
      <path d="M4 8l10-4v14l-9 6z" fill="#136c92" />
      <path d="M36 8L26 4v14l9 6z" fill="#49b9dc" />
      <path d="M14 3l6-2 6 2v14l-3-3h-6l-3 3z" fill="#f3a91f" stroke="#b95d0d" />
      <path d="M20 1v13" stroke="#b95d0d" />
      <path d="M5 25l10-6 5 5 5-5 10 6-15 11z" fill="#9dd3ec" stroke="#4b90b4" />
      <path d="M16 15h8v5l-4 4-4-4z" fill="#fff" />
    </>
  ),
};

const Icon = ({ name, className = "size-5" }) => (
  <svg viewBox="0 0 20 20" className={clsx("shrink-0", className)} aria-hidden="true">
    {art[name]}
  </svg>
);

const Caret = ({ className = "text-[#444]" }) => (
  <svg viewBox="0 0 7 4" className={clsx("h-1 w-[7px] shrink-0", className)} aria-hidden="true">
    <path d="M0 0h7L3.500 4z" fill="currentColor" />
  </svg>
);

const IconButton = ({ name, label, className, icon }) => (
  <button type="button" aria-label={label || name} className={clsx("flex shrink-0 items-center justify-center", className)}>
    <Icon name={name} className={icon} />
  </button>
);

const Divider = () => <span className="mx-1 h-5 w-px shrink-0 bg-[#b8bec6]" />;

const menus = ["Soubor", "Upravit", "Zobrazit", "Vložit", "Atributy", "Zjistit", "Nástroje", "Pomůcky", "Aplikace", "Okno", "Nápověda", "Cloud"];

const tabs = [
  "Tvar", "Plošné modelování", "Drátový model", "Přímá editace", "Plechový díl", "Svařování", "Mračno bodů",
  "Výměna dat", "Léčit", "PMI", "Nástroje", "Vizualizovat", "Zjistit", "Elektroda", "Forma", "Simulation", "Aplikace",
];

const TitleBar = () => (
  <header className="flex h-[26px] shrink-0 items-start overflow-hidden">
    <div className="flex items-start gap-2 pl-[2px]">
      <Icon name="logo" />
      <span className="-ml-1 mt-1 h-3 w-px bg-[#a9aeb3]" />
      {["doc", "open", "save", "printer", "printerAdd", "undo", "redo", "cycle"].map((name) => (
        <IconButton key={name} name={name} />
      ))}
      <svg viewBox="0 0 10 8" className="mt-[6px] h-2 w-[10px]">
        <path d="M0 0h10v2H0zM1 4h8L5 8z" fill="#111" />
      </svg>
      <svg viewBox="0 0 8 14" className="mt-[3px] h-[14px] w-2">
        <path d="M8 0v14L0 7z" fill="#2496e0" />
      </svg>
    </div>
    <nav className="ml-[18px] flex gap-[18px] leading-4 text-black">
      {menus.map((m) => (
        <button key={m} type="button">{m}</button>
      ))}
    </nav>
    <h1 className="mr-[284px] ml-auto whitespace-nowrap pt-[2px] leading-4 text-[#8a8d91]">ZW3D 2025 SP x64 - [* Díl003.Z3PRT]</h1>
  </header>
);

const TabBar = ({ active, onSelect }) => (
  <div className="flex h-[27px] shrink-0 border-b border-[#b5bbc8]">
    <button type="button" className="h-[26px] w-[73px] border border-[#1c4f9c] bg-[#2762b7] text-white">Soubor</button>
    <div className="ml-[2px] flex">
      {tabs.map((tab, i) => (
        <button
          key={tab + i}
          type="button"
          onClick={() => onSelect(i)}
          className={clsx(
            "h-[27px] px-[11px] whitespace-nowrap border border-b-0",
            active === i ? "border-[#b5bbc8] bg-[#fdfdfd] text-[#5b5470]" : "border-transparent text-[#3c3f44]"
          )}
        >
          {tab}
        </button>
      ))}
    </div>
    <button type="button" aria-label="Sbalit pás" className="ml-auto px-[14px]">
      <svg viewBox="0 0 12 10" className="h-[10px] w-3">
        <path d="M1 5l5-4 5 4v4L6 5 1 9z" fill="#fff" stroke="#6c7075" strokeWidth="1.500" />
      </svg>
    </button>
    <div className="relative mr-[6px] h-[26px] w-[163px]">
      <input aria-label="Najít příkaz" placeholder="Najít příkaz" className="h-[25px] w-full border border-[#b8bec6] bg-white pl-[2px] placeholder:text-[#777]" />
      <svg viewBox="0 0 14 14" className="absolute top-[6px] right-2 size-[14px]">
        <circle cx="6.500" cy="6.500" r="5.500" fill="none" stroke="#8f969c" />
        <path d="M10 10l3 3" stroke="#4c9cc0" strokeWidth="2" />
      </svg>
    </div>
  </div>
);

const BigButton = ({ icon, lines, caret, className }) => (
  <button type="button" className={clsx("flex shrink-0 flex-col items-center gap-[6px] pt-[11px]", className)}>
    <svg viewBox="0 0 40 40" className="size-10" aria-hidden="true">{bigArt[icon]}</svg>
    <span className="whitespace-nowrap leading-[15px]">
      {lines[0]}
      <br />
      {lines[1]}
      {caret && <span className="ml-1 inline-block"><Caret /></span>}
    </span>
  </button>
);

const SmallButton = ({ icon, label, caret }) => (
  <button type="button" className="flex h-[29px] items-center gap-1 whitespace-nowrap">
    <Icon name={icon} />
    {label}
    {caret && <span className="ml-1"><Caret /></span>}
  </button>
);

const Group = ({ title, className, children }) => (
  <section className={clsx("flex h-[113px] shrink-0 flex-col", className)}>
    <div className="flex flex-1">
      <div className="flex flex-1 flex-col">
        <div className="flex h-[93px]">{children}</div>
        <h2 className="text-center leading-4 text-[#6a6f82]">{title}</h2>
      </div>
      <span className="mt-[6px] mb-1 w-px bg-[#c5cad1]" />
    </div>
  </section>
);

const SmallGrid = ({ cols, children }) => <div className={clsx("grid content-start pt-1 pl-2", cols)}>{children}</div>;

const Ribbon = () => (
  <div className="flex h-[114px] shrink-0 overflow-hidden border-b border-[#b5bbc8] bg-[#fdfdfd] text-[#222]">
    <Group title="Základna" className="w-[109px]">
      <BigButton icon="sketch" lines={["Skica", ""]} className="w-[50px]" />
      <BigButton icon="plate" lines={["Vysunutí", "plechu"]} caret className="w-[52px]" />
    </Group>
    <Group title="Příruba" className="w-[361px]">
      <BigButton icon="flange" lines={["Příruba", ""]} caret className="w-[58px]" />
      <BigButton icon="flangeProfile" lines={["Příruba s", "profilem"]} className="w-[60px]" />
      <BigButton icon="transition" lines={["Přechod", ""]} className="w-[64px]" />
      <BigButton icon="lofted" lines={["Tažená", "příruba"]} className="w-[52px]" />
      <BigButton icon="bendLine" lines={["Ohyb podle", "čáry"]} className="w-[76px]" />
      <BigButton icon="zBend" lines={["Z ohyb", ""]} className="w-[42px]" />
    </Group>
    <Group title="Úprava" className="w-[191px]">
      <BigButton icon="extend" lines={["Prodloužit", "přírubu"]} className="w-[70px]" />
      <BigButton icon="chamfer" lines={["Zkosení", "ohybu"]} className="w-[48px]" />
      <BigButton icon="normalCut" lines={["Normálový", "řez"]} className="w-[72px]" />
    </Group>
    <Group title="Roh" className="w-[51px]">
      <BigButton icon="closeCorner" lines={["Uzavřít", "roh"]} className="w-[50px]" />
    </Group>
    <Group title="Tvarování" className="w-[200px]">
      <SmallGrid cols="grid-cols-[79px_auto]">
        <SmallButton icon="dimple" label="Důlek" />
        <SmallButton icon="extrude" label="Vysunout" />
        <SmallButton icon="slot" label="Štěrbina" />
        <SmallButton icon="hole" label="Díra" />
        <SmallButton icon="pierce" label="Děrování" />
        <SmallButton icon="mergeShape" label="Sloučit tvary" caret />
      </SmallGrid>
    </Group>
    <Group title="Ohyb" className="w-[424px]">
      <SmallGrid cols="grid-cols-[85px_151px_auto]">
        <SmallButton icon="fold" label="Svinout" />
        <SmallButton icon="linear" label="Lineární rozvinutí" />
        <SmallButton icon="stationary" label="Nastavit stacionární povrch." />
        <SmallButton icon="unfold" label="Rozvinout" />
        <SmallButton icon="changeBend" label="Změnit ohyb" />
        <span />
        <SmallButton icon="flat" label="Vyhlazený" />
        <SmallButton icon="bendInfo" label="Zobrazit Info ohybu" caret />
      </SmallGrid>
    </Group>
    <Group title="Konvertovat" className="w-[308px]">
      <SmallGrid cols="grid-cols-[120px_auto]">
        <SmallButton icon="rip" label="Načrtnutý útržek" />
        <SmallButton icon="convert" label="Konvertovat na plechový díl" />
        <SmallButton icon="shear" label="Nastřižení" />
        <span />
        <SmallButton icon="markBend" label="Označit ohyb" />
      </SmallGrid>
    </Group>
    <Group title="Základní úprava" className="w-[216px]">
      <SmallGrid>
        <SmallButton icon="pattern" label="Pole prvků" caret />
        <SmallButton icon="mirror" label="Zrcadlit geometrii" caret />
        <SmallButton icon="fillet" label="Zaoblení" caret />
      </SmallGrid>
    </Group>
  </div>
);

const Combo = ({ label, value = "" }) => (
  <div className="relative h-[26px] w-[165px] shrink-0">
    <select aria-label={label} disabled className="h-full w-full appearance-none border border-[#cdd3d9] bg-[#f0f0f0] pl-1 text-[#7d7d7d] opacity-100">
      <option>{value}</option>
    </select>
    <span className="pointer-events-none absolute top-[10px] right-2 flex"><Caret className="text-[#adadad]" /></span>
  </div>
);

const lit = "h-[26px] w-[27px] border border-[#cf9a3c] bg-[#fde16f]";

const SelectionBar = () => (
  <div className="flex h-[33px] shrink-0 items-center overflow-hidden pt-[3px]">
    <span className="mx-px h-5 border-l-2 border-dotted border-[#6d7480]" />
    <div className="ml-[5px] flex items-center gap-2">
      <IconButton name="cursorBulb" className={lit} />
      <span className="-ml-1 flex"><IconButton name="plus" /></span>
      <IconButton name="minus" />
      <IconButton name="pick" />
      <Caret />
      <IconButton name="hexSel" />
    </div>
    <span className="ml-1 flex items-center"><Divider /></span>
    <IconButton name="filter" className="mr-1 ml-[2px]" />
    <Combo label="Filtr" />
    <IconButton name="partFilter" className={clsx(lit, "mx-[2px]")} />
    <Combo label="Rozsah výběru" />
    <div className="ml-1 flex items-center gap-2">
      <IconButton name="chain" />
      <IconButton name="clock" />
    </div>
    <span className="mx-1 flex"><Divider /></span>
    <div className="flex items-center gap-2">
      <IconButton name="listPick" label="Výběr 1" />
      <IconButton name="listPick" label="Výběr 2" />
      <IconButton name="listPickOn" />
      <IconButton name="listPick" label="Výběr 3" />
      {["arrows2", "layersList", "boxSel", "handBox", "gearPart"].map((n) => (
        <IconButton key={n} name={n} />
      ))}
    </div>
    <span className="mx-[3px] flex"><Divider /></span>
    <div className="mr-2 flex items-center gap-2">
      <IconButton name="ringArrow" />
      <IconButton name="poles" />
      <IconButton name="squares" />
    </div>
    <Combo label="Směr" value="Normála" />
    <div className="ml-1 flex items-center gap-2">
      {["handCursor", "gearCursor", "play", "dots", "lineEnd", "lineMid", "circleDot", "circleQuad", "spline", "spline2", "tangent", "lineEnd", "mesh", "mesh"].map((n, i) => (
        <IconButton key={n + i} name={n} />
      ))}
    </div>
  </div>
);

const SectionHead = ({ children, closed }) => (
  <button type="button" className="flex h-[29px] w-full shrink-0 items-center gap-[7px] border-b border-[#b8bec6] bg-[#fdfdfd] px-1 text-left font-bold text-[#333a44]">
    <svg viewBox="0 0 10 10" className={clsx("size-[10px]", closed && "-rotate-90")}>
      <path d="M0 0h10L5 10z" fill="#565d66" />
    </svg>
    {children}
  </button>
);

const optionShapes = [
  <>
    <path d="M3 4h29v19H3z" fill="url(#gold)" stroke="#d2541a" />
    <path d="M34 4h7M34 23h7M37.500 4v19" stroke="#b3303a" strokeWidth="2" />
  </>,
  <>
    <path d="M3 14L32 4v19H3z" fill="url(#gold)" stroke="#d2541a" />
    <path d="M2 15L33 2" stroke="#22b322" strokeWidth="2" />
    <path d="M37 24V11" stroke="#c9262c" strokeWidth="3" />
    <path d="M33 12l4-6 4 6z" fill="#c9262c" />
  </>,
  <>
    <path d="M3 14h29v9H3z" fill="url(#gold)" stroke="#d2541a" />
    <path d="M2 15L33 2" stroke="#22b322" strokeWidth="2" />
    <path d="M37 24V11" stroke="#c9262c" strokeWidth="3" />
    <path d="M33 12l4-6 4 6z" fill="#c9262c" />
  </>,
];

const FieldRow = ({ id, label, value }) => (
  <div className="flex h-[31px] items-start">
    <label htmlFor={id} className="w-[127px] shrink-0 leading-[27px]">{label}</label>
    <input id={id} defaultValue={value} className="h-[27px] min-w-0 flex-1 border border-[#b8bec6] bg-white px-[3px] text-[14px]" />
    <IconButton name="down" label={label} className="mx-[5px] h-[27px]" icon="size-[18px]" />
  </div>
);

const MethodBox = ({ n }) => (
  <fieldset className="mx-[10px] min-w-0 border border-[#9d9d9d] px-[10px] pb-1 shadow-[1px_1px_0_#fff]">
    <legend className="px-[5px] leading-4">Strana {n}</legend>
    <div className="flex items-center pt-[10px] pb-px">
      <label htmlFor={"metoda" + n} className="w-[106px]">Metoda</label>
      <div className="relative flex-1">
        <select id={"metoda" + n} className="h-[26px] w-full appearance-none border border-[#b8bec6] bg-white pl-[3px] text-black">
          <option>Normála na prodlouženou hranu</option>
        </select>
        <span className="pointer-events-none absolute top-[10px] right-[6px] flex"><Caret /></span>
      </div>
    </div>
  </fieldset>
);

const toolBox = "h-[29px] w-[33px] border border-[#c3c8ce] bg-[#fdfdfd]";

const CommandPanel = () => {
  const [option, setOption] = useState(2);

  return (
    <aside className="flex w-[444px] shrink-0 flex-col">
      <div className="flex h-[27px] shrink-0 items-center pr-2 pl-[2px] text-[#3a3d42]">
        Prodloužit přírubu
        <button type="button" aria-label="Minimalizovat" className="ml-auto">
          <svg viewBox="0 0 12 10" className="h-[10px] w-3">
            <path d="M1 1h10v8H1zM3.500 4h5v2h-5z" fill="none" stroke="#92969a" />
          </svg>
        </button>
        <button type="button" aria-label="Zavřít" className="ml-[10px]">
          <svg viewBox="0 0 14 12" className="h-3 w-[14px]">
            <path d="M1 1h4l2 3 2-3h4L9.500 6l3.500 5H9L7 8l-2 3H1l3.500-5z" fill="#fff" stroke="#92969a" />
          </svg>
        </button>
      </div>
      <div className="flex min-h-0 flex-1 border-t border-r border-[#b8bec6]">
        <div className="flex w-[37px] shrink-0 flex-col border-r border-[#b8bec6]">
          <button type="button" aria-label="Příkaz" className="-mr-px flex h-[59px] items-center justify-center border-b border-[#b8bec6] bg-[#fdfdfd]">
            <svg viewBox="0 0 40 40" className="size-[29px]">{bigArt.extend}</svg>
          </button>
          {["manager", "visual", "scenery", "users"].map((n) => (
            <IconButton key={n} name={n} className="h-[60px]" icon="size-7" />
          ))}
        </div>
        <div className="flex min-w-0 flex-1 flex-col pl-[3px]">
          <div className="flex h-[35px] shrink-0 items-center gap-[2px]">
            <IconButton name="check" label="OK" className={toolBox} />
            <IconButton name="cross" label="Storno" className={toolBox} />
            <IconButton name="applyBox" label="Použít" className={toolBox} />
            <span className="flex-1" />
            <IconButton name="info" label="Informace" className={toolBox} />
            <IconButton name="collapse" label="Sbalit" icon="h-5 w-[15px]" className="mr-[3px] h-[29px] w-[17px] border border-[#c3c8ce] bg-[#fdfdfd]" />
          </div>
          <div className="flex flex-1 flex-col gap-[2px] bg-[#dce0e8] pt-px pr-[5px] pl-[2px] text-black">
            <section className="border border-[#b8bec6]">
              <SectionHead>Požadováno</SectionHead>
              <div className="relative flex justify-center pt-[3px]">
                {optionShapes.map((shape, i) => (
                  <button
                    key={i}
                    type="button"
                    aria-label={"Způsob " + (i + 1)}
                    onClick={() => setOption(i)}
                    className={clsx(
                      "mr-px size-[45px] border",
                      option === i ? "border-[#ec1c24] bg-[#fedc72] outline-2 outline-[#ec1c24]" : "border-[#c3c8ce] bg-[#fdfdfd]"
                    )}
                  >
                    <svg viewBox="0 0 43 43" className="size-[43px]">
                      <path d="M3 23h29v17H3z" fill="url(#sea)" stroke="#7a5a52" />
                      {shape}
                    </svg>
                  </button>
                ))}
              </div>
              <div className="mt-1 pr-3 pb-px pl-[10px]">
                <FieldRow id="hrana" label="Hrana" value="E28" />
                <FieldRow id="rovina" label="Rovina" value="Rovina3" />
                <div className="flex h-[31px] items-start">
                  <label htmlFor="odsazeni" className="w-[127px] shrink-0 leading-[27px]">Odsazení</label>
                  <div className="flex h-[27px] w-[203px] items-center border border-[#b8bec6] bg-white pr-[6px]">
                    <input id="odsazeni" defaultValue="0" className="min-w-0 flex-1 px-[3px] text-[14px]" />
                    <span className="text-[12px]">mm</span>
                    <span className="ml-3 flex flex-col gap-2">
                      <button type="button" aria-label="Více" className="rotate-180"><Caret className="block scale-75" /></button>
                      <button type="button" aria-label="Méně"><Caret className="block scale-75" /></button>
                    </span>
                  </div>
                  <IconButton name="downGold" className="ml-[5px] h-[27px]" icon="size-[18px]" />
                  <span className="ml-2 flex h-[27px] items-center"><Caret /></span>
                </div>
              </div>
            </section>
            <section className="border border-[#b8bec6] pb-[3px]">
              <SectionHead>Prodloužení</SectionHead>
              <div className="flex flex-col gap-[2px] pt-[3px]">
                <MethodBox n={1} />
                <MethodBox n={2} />
              </div>
            </section>
          </div>
        </div>
      </div>
    </aside>
  );
};

const Model = () => (
  <svg viewBox="448 228 1053 772" className="absolute top-0 left-0 h-[772px] w-[1053px]" fontFamily="Liberation Sans, sans-serif">
    {/* flange seen from above */}
    <path d="M568 598l17-7 435 40-1 8-2 7.500h-17L700 621l-133-15z" fill="#9dbfca" />
    <path d="M568 603l432 38v6L700 621l-133-15z" fill="#94b3bf" />
    <path d="M1000 639h17l-1 7.500h-16z" fill="#64818c" stroke="#1d2b30" />
    <path d="M700 621l300 25.500h17" fill="none" stroke="#606568" strokeWidth="2" />
    <path d="M568 598.500l432 40h17M583 597l434 41M584 597l1-6M1020 631l-3 16" fill="none" stroke="#111" strokeWidth="1.300" />
    {/* selected face */}
    <path d="M602 439.500l429 40-11 151.500-434.500-40.500z" fill="#7b9ec5" stroke="#0a8cff" strokeWidth="2" />
    <path d="M1030 510l-10 122" stroke="#0a8cff" strokeWidth="3" />
    <path d="M597 469.500l432 40" stroke="#ff9900" strokeWidth="3" />
    <path d="M568 600l5-68 10 1 2 1-3 58-14 8z" fill="#d9cdbc" opacity=".6" />
    <path d="M585 533l62 5-6 73-59-5z" fill="#8d9196" opacity=".35" />
    <path d="M573 532l74 6.500-7 73.500M583 532l-6 66" fill="none" stroke="#9c661d" />
    {/* datum axes */}
    <path d="M567 605l8.500-97" stroke="#3b30c8" strokeWidth="2" />
    <path d="M576 494l4 15h-9z" fill="#1d1df0" />
    <path d="M567 605l10-120 2-14" fill="none" stroke="#9c5a14" strokeWidth="1.300" />
    <path d="M580 459l2 14h-6z" fill="#c98717" />
    <path d="M567 605.500l95 9" stroke="#b0421a" strokeWidth="2" />
    <path d="M677 616l-16 3v-9z" fill="#e81c1c" />
    <path d="M677 616l22 2" stroke="#9c661d" strokeWidth="1.500" />
    <path d="M709 619l-13 3v-7z" fill="#d3921f" />
    <path d="M575 605l8-1v5l-6-1z" fill="#54cf54" />
    <path d="M588 607v6M586 608h4" stroke="#9c661d" />
    <text x="574" y="451" fontSize="20" fill="#a0691c">Z</text>
    <text x="720" y="628" fontSize="20" fill="#a0691c">X</text>
    {/* side markers */}
    <path d="M600 424l-3 46M1033 466l-3 44" stroke="#222" strokeWidth="4" />
    <path d="M600 436l-3 32M1033 478l-3 30" stroke="#999" />
    <path d="M600 423l4 15h-7zM1034 465l3 15h-8z" fill="#222" />
    <text x="602" y="463" fontSize="21" fill="#111">2</text>
    <text x="1034" y="503" fontSize="21" fill="#111">1</text>
    {/* reference plane */}
    <path d="M761 411l21-1 140 39.500-20 .5z" fill="none" stroke="#ff9900" strokeWidth="3" />
    <path d="M797 417l62 15-10 2-52-15z" fill="#ff9900" stroke="#ff9900" strokeWidth="4" />
    <path d="M784 410l4 5 5-5M788 415v6" fill="none" stroke="#9db021" strokeWidth="1.500" />
    <path d="M844 424l9 11M853 424l-9 11" stroke="#ff7a00" strokeWidth="1.500" />
    {/* view triad */}
    <path d="M536 894l5-56" stroke="#1414ff" strokeWidth="2" />
    <path d="M542 826l3 14h-7z" fill="#3434e8" />
    <path d="M536 895l58 5" stroke="#ff1010" strokeWidth="2" />
    <path d="M606 901.500l-16 3v-7z" fill="#d81c1c" />
    <path d="M538 893l8 4-5 2z" fill="#20a820" />
    <path d="M542 888l5 7 5-7M547 895v6" fill="none" stroke="#30d020" strokeWidth="1.500" />
    <text x="538" y="824" fontSize="20" fill="#1414ff">Z</text>
    <text x="608" y="909" fontSize="20" fill="#ff1010">X</text>
  </svg>
);

const ViewTool = ({ name, caret }) => (
  <span className="flex items-center gap-[9px]">
    <IconButton name={name} />
    {caret && <Caret />}
  </span>
);

const Viewport = () => (
  <main className="flex min-w-0 flex-1 flex-col">
    <div className="flex h-[27px] shrink-0 items-end">
      <div className="relative z-10 -mb-px flex h-[27px] w-[154px] items-center justify-center gap-2 border border-b-0 border-[#b8bec6] bg-[#fdfdfd] pl-5 whitespace-nowrap text-black">
        * Díl003.Z3PRT
        <button type="button" aria-label="Zavřít kartu">
          <svg viewBox="0 0 12 12" className="size-3">
            <path d="M1 1l10 10M11 1L1 11" stroke="#7f6f47" strokeWidth="2.500" />
          </svg>
        </button>
      </div>
      <button type="button" aria-label="Nová karta" className="mb-[6px] ml-2">
        <svg viewBox="0 0 13 13" className="size-[13px]">
          <path d="M6.500 0v13M0 6.500h13" stroke="#a39f9f" strokeWidth="3" />
        </svg>
      </button>
      <svg viewBox="0 0 10 10" className="mr-[6px] mb-[7px] ml-auto size-[10px]">
        <path d="M0 0h10v3H0zM0 5h10l-5 5z" fill="#8f9193" />
      </svg>
    </div>
    <div className="relative flex-1 overflow-hidden border border-t-[#b8bec6] border-r-[#b8bec6] border-b-[#eef0f2] border-l-[#b8bec6] bg-linear-to-b from-white to-[#9c9c9c]">
      <Model />
      <div className="relative flex h-[29px] items-center gap-2 pl-[172px]">
        <ViewTool name="exit" />
        <ViewTool name="camera" caret />
        <span className="ml-1 flex"><IconButton name="eraser" /></span>
        <ViewTool name="planeUp" />
        <ViewTool name="shaded" caret />
        <ViewTool name="wire" caret />
        <ViewTool name="polygon" caret />
        <ViewTool name="zoomDoc" caret />
        <ViewTool name="target" caret />
        <ViewTool name="viewBox" />
        <ViewTool name="dims" caret />
        <ViewTool name="monitor" caret />
        <button type="button" aria-label="Barva hran" className="h-[11px] w-5 border border-[#666] bg-black" />
        <button type="button" aria-label="Barva ploch" className="size-5 border border-[#26140f] bg-[#bfe6f6]" />
        <ViewTool name="layers" caret />
        <div className="relative flex h-[26px] w-36 items-center border border-[#d0d4d8] bg-[#eeeeef] pl-[6px]">
          <Icon name="bulb" className="size-4" />
          <Icon name="disc" className="size-4" />
          <select aria-label="Hladina" disabled className="flex-1 appearance-none pl-2 text-[12px] text-[#7d7d7d] opacity-100">
            <option>Hladina0000</option>
          </select>
          <span className="pointer-events-none absolute top-[10px] right-2 flex"><Caret className="text-[#adadad]" /></span>
        </div>
      </div>
      <div className="relative pl-5 text-[14px] leading-[26px] text-[#111]">
        <p className="-mt-1">&lt;střední-klik&gt; pro pokračování.</p>
        <p>&lt;Shift-pravý-klik&gt; pro zobrazení filtru výběru.</p>
      </div>
      <p className="absolute bottom-0 left-1 text-[20px] leading-[22px] text-[#111]">316.254mm</p>
    </div>
  </main>
);

const navBox = "h-[31px] w-[35px] border";

const FilePanel = () => (
  <aside className="flex w-[275px] shrink-0 flex-col overflow-hidden">
    <h2 className="flex h-[27px] shrink-0 items-center pl-[6px] text-[#3a3d42]">Prohlížeč souborů</h2>
    <div className="flex min-h-0 flex-1 flex-col border-t border-l border-[#b8bec6] pl-px">
      <div className="flex h-[35px] shrink-0 items-start gap-1 pt-px">
        <IconButton name="back" label="Zpět" className={clsx(navBox, "border-[#d3d7db] bg-[#f0f0f0]")} />
        <IconButton name="forward" label="Vpřed" className={clsx(navBox, "border-[#d3d7db] bg-[#f0f0f0]")} />
        <IconButton name="up" label="Nahoru" className={clsx(navBox, "border-[#d3d7db] bg-[#f0f0f0]")} />
        <IconButton name="refresh" label="Obnovit" className={clsx(navBox, "border-[#b8bec6] bg-[#fdfdfd]")} icon="size-[22px]" />
      </div>
      <ul className="h-[226px] shrink-0 overflow-hidden border border-r-0 border-[#b8bec6] bg-white text-[#222]">
        {[{ icon: "star", text: "Oblíbené" }, { icon: "folder", text: "(C:)" }, ...Array(8).fill(null)].map((row, i) => (
          <li key={i} className="flex h-[23px] items-center gap-1 even:bg-[#f4f4f4]">
            {row && (
              <>
                <svg viewBox="0 0 6 10" className="mr-1 ml-[6px] h-[10px] w-[6px]">
                  <path d="M1 1l4 4-4 4" fill="none" stroke="#7f7f7f" strokeWidth="1.500" />
                </svg>
                <Icon name={row.icon} className="h-[18px] w-5" />
                {row.text}
              </>
            )}
          </li>
        ))}
      </ul>
      <section className="mt-[9px] shrink-0 border border-r-0 border-[#b8bec6] bg-[#dce0e8]">
        <SectionHead>Hledat</SectionHead>
        <div className="relative px-[3px] pt-[3px] pb-[2px]">
          <input aria-label="Hledat" placeholder="Hledat..." className="h-[31px] w-full border border-[#b8bec6] bg-white px-1 placeholder:text-[#777]" />
          <span className="absolute top-4 right-[10px] flex"><Caret /></span>
        </div>
      </section>
      <section className="mt-[2px] flex min-h-0 flex-1 flex-col border border-r-0 border-[#b8bec6] bg-[#dce0e8]">
        <SectionHead>Seznam souborů</SectionHead>
        <div className="flex shrink-0 gap-[3px] border-b border-[#b8bec6] py-[3px] pl-[2px]">
          <button type="button" aria-label="Zobrazení" className="flex h-[31px] w-[50px] items-center border border-[#b8bec6]">
            <span className="flex h-full w-[38px] items-center justify-center bg-[#fdfdfd]"><Icon name="tree" /></span>
            <span className="pl-[2px]"><Caret className="text-black" /></span>
          </button>
          <select aria-label="Typ souborů" className="h-[31px] flex-1 appearance-none border border-r-0 border-[#b8bec6] bg-white pl-1 text-black">
            <option>All Support Files</option>
          </select>
        </div>
        <div className="flex-1 bg-white" />
        <div className="flex h-[37px] shrink-0 items-center border-t border-[#b8bec6] pl-px text-black">
          <label htmlFor="objekty" className="w-[89px] whitespace-nowrap">Seznam objektů</label>
          <input id="objekty" className="h-[31px] min-w-0 flex-1 border border-r-0 border-[#b8bec6] bg-white px-1" />
        </div>
      </section>
      <section className="mt-[2px] shrink-0 border border-r-0 border-b-0 border-[#b8bec6]">
        <SectionHead closed>Náhled</SectionHead>
      </section>
      <div className="flex h-[25px] shrink-0 items-center pt-[2px] text-black">
        <button type="button" className="h-full w-[122px] border-r border-[#b8bec6] bg-[#fdfdfd]">Prohlížeč souborů</button>
        <button type="button" className="px-4">Výstup</button>
      </div>
    </div>
  </aside>
);

const App = () => {
  const [activeTab, setActiveTab] = useState(4);

  return (
    <div className="flex h-screen flex-col overflow-hidden bg-[#e1e5e8] font-['Open_Sans',sans-serif] text-[11px]">
      <svg className="absolute size-0" aria-hidden="true">
        <defs>
          <linearGradient id="gold">
            <stop offset="0" stopColor="#ffe626" />
            <stop offset="1" stopColor="#f8a93a" />
          </linearGradient>
          <linearGradient id="sea">
            <stop offset="0" stopColor="#22c8ee" />
            <stop offset="1" stopColor="#06688f" />
          </linearGradient>
        </defs>
      </svg>
      <TitleBar />
      <TabBar active={activeTab} onSelect={setActiveTab} />
      <Ribbon />
      <SelectionBar />
      <div className="flex min-h-0 flex-1 gap-[3px] pb-1">
        <CommandPanel />
        <Viewport />
        <FilePanel />
      </div>
    </div>
  );
};

export default App;
